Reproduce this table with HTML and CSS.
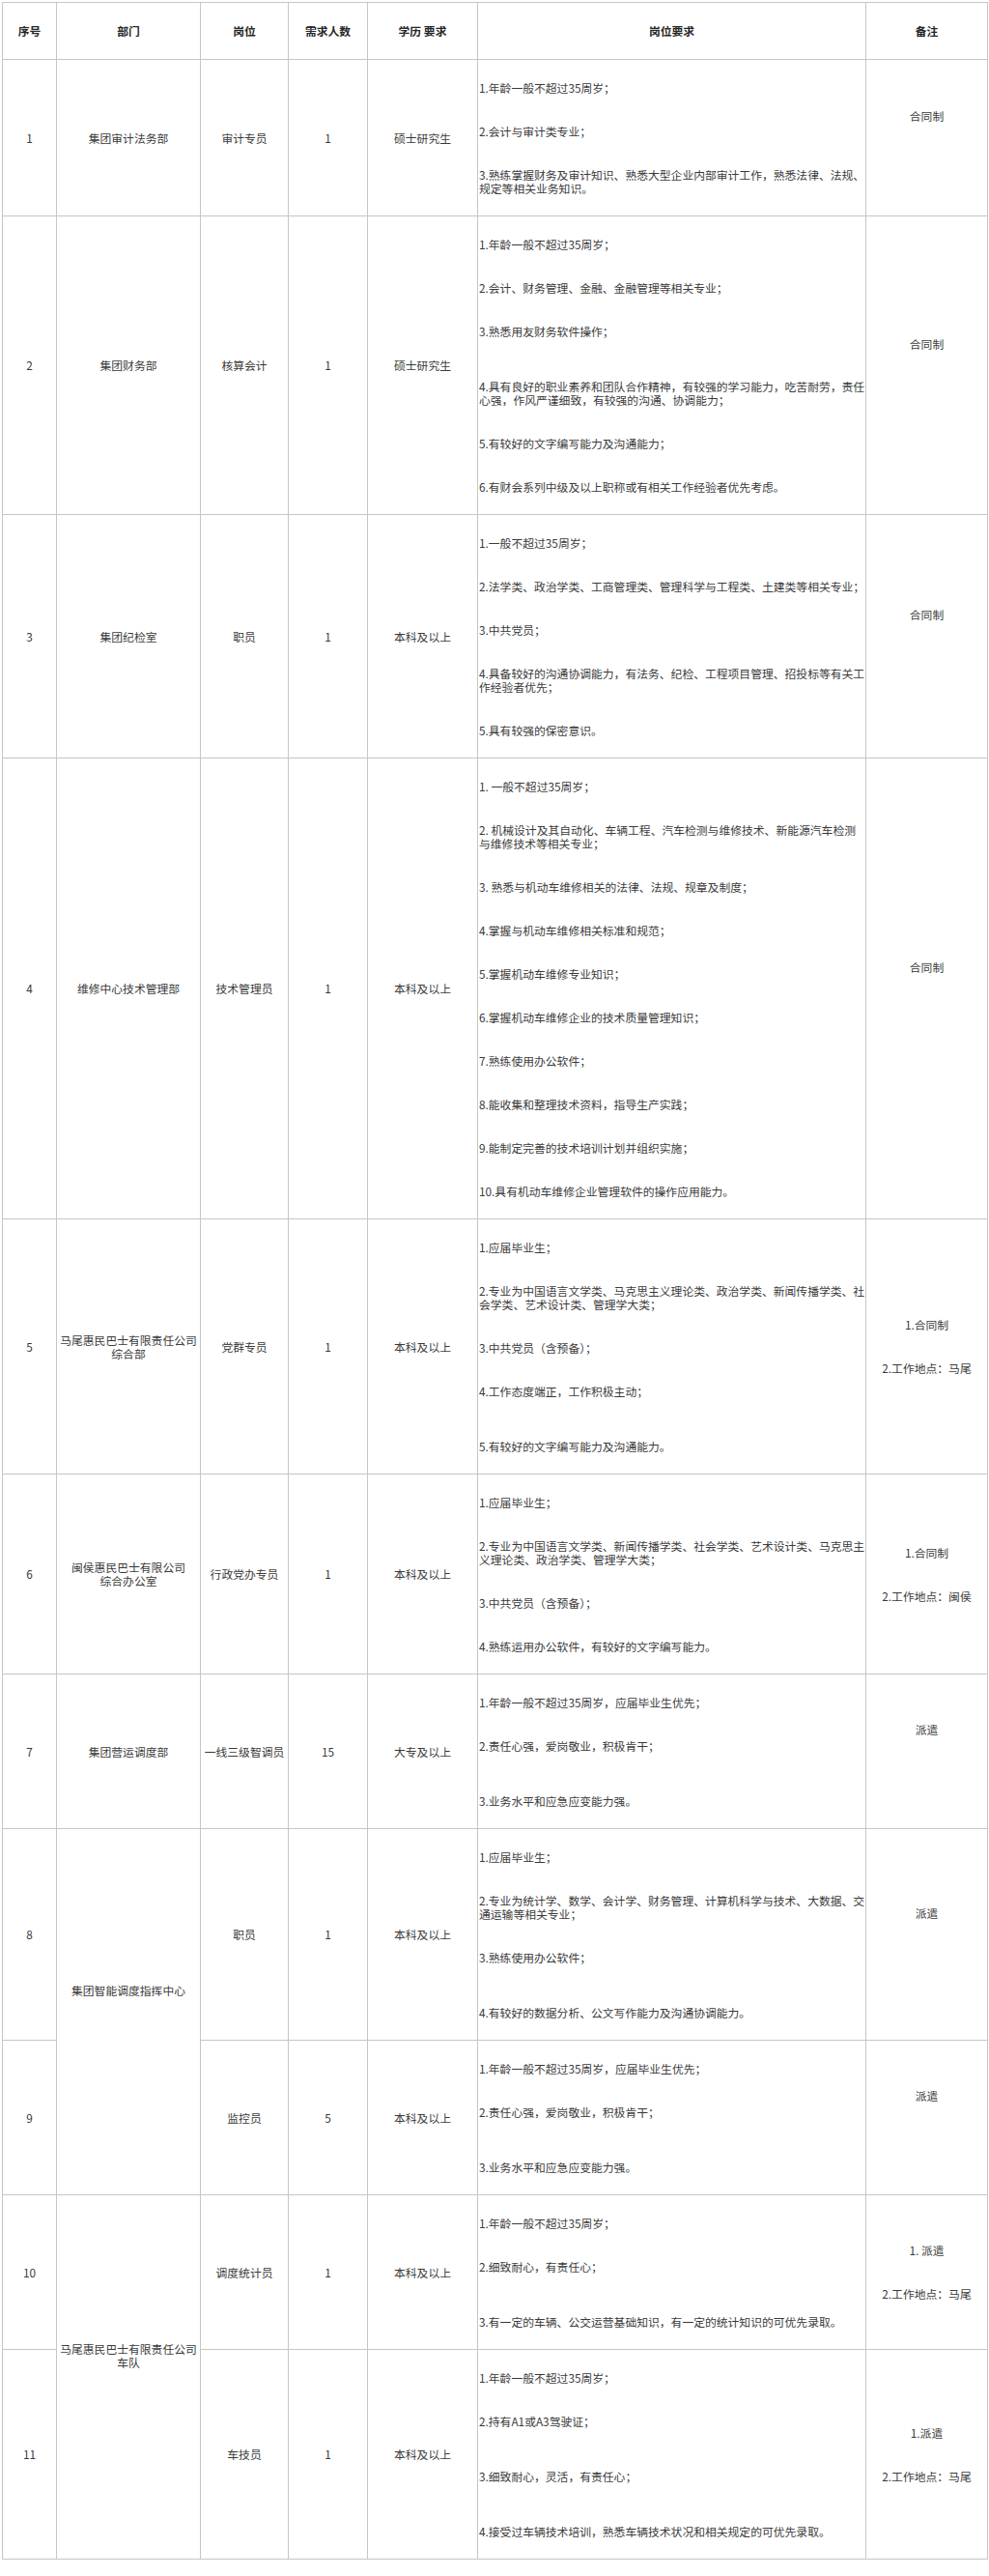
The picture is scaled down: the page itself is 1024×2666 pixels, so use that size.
FILE: index.html
```html
<!DOCTYPE html>
<html lang="zh-CN">
<head>
<meta charset="utf-8">
<title>岗位需求表</title>
<link rel="stylesheet" href="styles.css">
</head>
<body>
<table class="sheet">
  <colgroup>
    <col class="c-no"><col class="c-dept"><col class="c-post"><col class="c-num"><col class="c-edu"><col class="c-req"><col class="c-note">
  </colgroup>
  <thead>
    <tr><th>序号</th><th>部门</th><th>岗位</th><th>需求人数</th><th>学历 要求</th><th>岗位要求</th><th>备注</th></tr>
  </thead>
  <tbody>
    <tr>
      <td>1</td><td>集团审计法务部</td><td>审计专员</td><td>1</td><td>硕士研究生</td>
      <td class="req">
        <p>1.年龄一般不超过35周岁；</p>
        <p>2.会计与审计类专业；</p>
        <p>3.熟练掌握财务及审计知识、熟悉大型企业内部审计工作，熟悉法律、法规、<br>规定等相关业务知识。</p>
      </td>
      <td class="note"><div class="lift"><p>合同制</p></div></td>
    </tr>
    <tr>
      <td>2</td><td>集团财务部</td><td>核算会计</td><td>1</td><td>硕士研究生</td>
      <td class="req">
        <p>1.年龄一般不超过35周岁；</p>
        <p>2.会计、财务管理、金融、金融管理等相关专业；</p>
        <p>3.熟悉用友财务软件操作；</p>
        <p class="more">4.具有良好的职业素养和团队合作精神，有较强的学习能力，吃苦耐劳，责任<br>心强，作风严谨细致，有较强的沟通、协调能力；</p>
        <p>5.有较好的文字编写能力及沟通能力；</p>
        <p>6.有财会系列中级及以上职称或有相关工作经验者优先考虑。</p>
      </td>
      <td class="note"><div class="lift"><p>合同制</p></div></td>
    </tr>
    <tr>
      <td>3</td><td>集团纪检室</td><td>职员</td><td>1</td><td>本科及以上</td>
      <td class="req">
        <p>1.一般不超过35周岁；</p>
        <p>2.法学类、政治学类、工商管理类、管理科学与工程类、土建类等相关专业；</p>
        <p>3.中共党员；</p>
        <p>4.具备较好的沟通协调能力，有法务、纪检、工程项目管理、招投标等有关工<br>作经验者优先；</p>
        <p>5.具有较强的保密意识。</p>
      </td>
      <td class="note"><div class="lift"><p>合同制</p></div></td>
    </tr>
    <tr>
      <td>4</td><td>维修中心技术管理部</td><td>技术管理员</td><td>1</td><td>本科及以上</td>
      <td class="req">
        <p>1. 一般不超过35周岁；</p>
        <p>2. 机械设计及其自动化、车辆工程、汽车检测与维修技术、新能源汽车检测<br>与维修技术等相关专业；</p>
        <p>3. 熟悉与机动车维修相关的法律、法规、规章及制度；</p>
        <p>4.掌握与机动车维修相关标准和规范；</p>
        <p>5.掌握机动车维修专业知识；</p>
        <p>6.掌握机动车维修企业的技术质量管理知识；</p>
        <p>7.熟练使用办公软件；</p>
        <p>8.能收集和整理技术资料，指导生产实践；</p>
        <p>9.能制定完善的技术培训计划并组织实施；</p>
        <p>10.具有机动车维修企业管理软件的操作应用能力。</p>
      </td>
      <td class="note"><div class="lift"><p>合同制</p></div></td>
    </tr>
    <tr>
      <td>5</td><td class="dept">马尾惠民巴士有限责任公司<br>综合部</td><td>党群专员</td><td>1</td><td>本科及以上</td>
      <td class="req">
        <p>1.应届毕业生；</p>
        <p>2.专业为中国语言文学类、马克思主义理论类、政治学类、新闻传播学类、社<br>会学类、艺术设计类、管理学大类；</p>
        <p>3.中共党员（含预备）；</p>
        <p>4.工作态度端正，工作积极主动；</p>
        <p class="more">5.有较好的文字编写能力及沟通能力。</p>
      </td>
      <td class="note"><p>1.合同制</p><p>2.工作地点：马尾</p></td>
    </tr>
    <tr>
      <td>6</td><td class="dept">闽侯惠民巴士有限公司<br>综合办公室</td><td>行政党办专员</td><td>1</td><td>本科及以上</td>
      <td class="req">
        <p>1.应届毕业生；</p>
        <p>2.专业为中国语言文学类、新闻传播学类、社会学类、艺术设计类、马克思主<br>义理论类、政治学类、管理学大类；</p>
        <p>3.中共党员（含预备）；</p>
        <p>4.熟练运用办公软件，有较好的文字编写能力。</p>
      </td>
      <td class="note"><p>1.合同制</p><p>2.工作地点：闽侯</p></td>
    </tr>
    <tr>
      <td>7</td><td>集团营运调度部</td><td>一线三级智调员</td><td>15</td><td>大专及以上</td>
      <td class="req">
        <p>1.年龄一般不超过35周岁，应届毕业生优先；</p>
        <p>2.责任心强，爱岗敬业，积极肯干；</p>
        <p class="more">3.业务水平和应急应变能力强。</p>
      </td>
      <td class="note"><div class="lift"><p>派遣</p></div></td>
    </tr>
    <tr>
      <td>8</td><td rowspan="2"><div class="lift">集团智能调度指挥中心</div></td><td>职员</td><td>1</td><td>本科及以上</td>
      <td class="req">
        <p>1.应届毕业生；</p>
        <p>2.专业为统计学、数学、会计学、财务管理、计算机科学与技术、大数据、交<br>通运输等相关专业；</p>
        <p>3.熟练使用办公软件；</p>
        <p class="more">4.有较好的数据分析、公文写作能力及沟通协调能力。</p>
      </td>
      <td class="note"><div class="lift"><p>派遣</p></div></td>
    </tr>
    <tr>
      <td>9</td><td>监控员</td><td>5</td><td>本科及以上</td>
      <td class="req">
        <p>1.年龄一般不超过35周岁，应届毕业生优先；</p>
        <p>2.责任心强，爱岗敬业，积极肯干；</p>
        <p class="more">3.业务水平和应急应变能力强。</p>
      </td>
      <td class="note"><div class="lift"><p>派遣</p></div></td>
    </tr>
    <tr>
      <td>10</td><td rowspan="2" class="dept"><div class="lift">马尾惠民巴士有限责任公司<br>车队</div></td><td>调度统计员</td><td>1</td><td>本科及以上</td>
      <td class="req">
        <p>1.年龄一般不超过35周岁；</p>
        <p>2.细致耐心，有责任心；</p>
        <p class="more">3.有一定的车辆、公交运营基础知识，有一定的统计知识的可优先录取。</p>
      </td>
      <td class="note"><p>1. 派遣</p><p>2.工作地点：马尾</p></td>
    </tr>
    <tr>
      <td>11</td><td>车技员</td><td>1</td><td>本科及以上</td>
      <td class="req">
        <p>1.年龄一般不超过35周岁；</p>
        <p>2.持有A1或A3驾驶证；</p>
        <p class="more">3.细致耐心，灵活，有责任心；</p>
        <p class="more">4.接受过车辆技术培训，熟悉车辆技术状况和相关规定的可优先录取。</p>
      </td>
      <td class="note"><p>1.派遣</p><p>2.工作地点：马尾</p></td>
    </tr>
  </tbody>
</table>
</body>
</html>
```

FILE: styles.css
```css
html, body {
  margin: 0;
  padding: 0;
  background: #ffffff;
}

body {
  font-family: "Noto Sans CJK SC", "Noto Sans", sans-serif;
  font-size: 11.8px;
  color: #3a3a3a;
}

.sheet {
  border-collapse: collapse;
  table-layout: fixed;
  width: 1020px;
  margin: 2px 0 0 2px;
}

.c-no { width: 56px; }
.c-dept { width: 149px; }
.c-post { width: 91px; }
.c-num { width: 82px; }
.c-edu { width: 114px; }
.c-req { width: 402px; }
.c-note { width: 126px; }

.sheet th,
.sheet td {
  border: 1px solid #c6c6c6;
  padding: 0;
  text-align: center;
  vertical-align: middle;
  line-height: 14px;
  font-weight: normal;
}

.sheet th {
  padding: 22px 0;
  font-weight: bold;
  color: #262626;
}

.sheet .dept {
  white-space: nowrap;
}

.sheet .req {
  text-align: left;
  white-space: nowrap;
  padding: 22px 0 21px 1px;
}

.req p,
.note p {
  margin: 31px 0 0;
}

.req p:first-child,
.note p:first-child {
  margin-top: 0;
}

.req p.more {
  margin-top: 43px;
}

.lift {
  padding-bottom: 45px;
}
```
